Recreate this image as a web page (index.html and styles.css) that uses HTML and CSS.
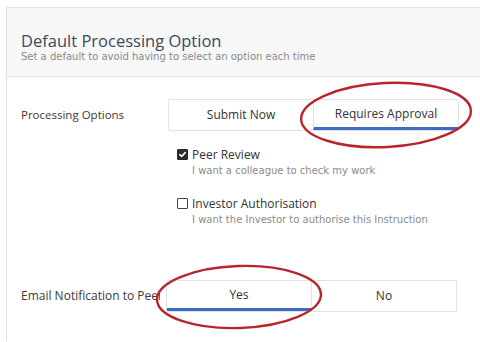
FILE: index.html
```html
<!DOCTYPE html>
<html>
<head>
<meta charset="utf-8">
<link rel="stylesheet" href="styles.css">
</head>
<body>
<div class="card">
  <div class="card-header">
    <h1 class="title">Default Processing Option</h1>
    <p class="subtitle">Set a default to avoid having to select an option each time</p>
  </div>
  <div class="card-body">
    <div class="row">
      <div class="label">Processing Options</div>
      <div class="field">
        <div class="seg">
          <div class="seg-btn">Submit Now</div>
          <div class="seg-btn active">Requires Approval</div>
        </div>
        <div class="checks">
          <div class="check">
            <div class="check-line">
              <span class="box checked"><svg width="9" height="9" viewBox="0 0 9 9"><path d="M1.8 4.6 L3.7 6.4 L7.2 2.6" fill="none" stroke="#fff" stroke-width="1.6" stroke-linecap="round" stroke-linejoin="round"/></svg></span>
              <span class="check-label">Peer Review</span>
            </div>
            <div class="check-desc">I want a colleague to check my work</div>
          </div>
          <div class="check">
            <div class="check-line">
              <span class="box"></span>
              <span class="check-label">Investor Authorisation</span>
            </div>
            <div class="check-desc">I want the Investor to authorise this Instruction</div>
          </div>
        </div>
      </div>
    </div>
    <div class="row row-email">
      <div class="label label-email"><span class="label-clip">Email Notification to Peer Reviewer</span></div>
      <div class="field">
        <div class="seg">
          <div class="seg-btn active">Yes</div>
          <div class="seg-btn">No</div>
        </div>
      </div>
    </div>
  </div>
</div>
<svg class="annot" width="480" height="342" viewBox="0 0 480 342">
  <ellipse cx="386" cy="115" rx="85" ry="32" transform="rotate(-3 386 115)" fill="none" stroke="#b8262c" stroke-width="2.4"/>
  <ellipse cx="239" cy="297" rx="82" ry="31" transform="rotate(-2 239 297)" fill="none" stroke="#b8262c" stroke-width="2.4"/>
</svg>
</body>
</html>
```
FILE: styles.css
```css
html, body {
  margin: 0;
  padding: 0;
  background: #fff;
  width: 480px;
  height: 342px;
  overflow: hidden;
  font-family: "Open Sans", "DejaVu Sans", sans-serif;
  color: #333;
}
.card {
  margin: 7px 0 0 6px;
  border: 1px solid #e2e2e2;
  border-right: none;
  border-bottom: none;
  height: 334px;
  box-sizing: border-box;
  overflow: hidden;
}
.card-header {
  background: #f7f7f7;
  border-bottom: 1px solid #e4e4e4;
  height: 69px;
  box-sizing: border-box;
  padding: 23px 14px 0 14px;
}
.title {
  margin: 0;
  font-size: 16.5px;
  font-weight: normal;
  color: #3c4a5c;
  line-height: 20px;
}
.subtitle {
  margin: 0;
  font-family: "DejaVu Sans", sans-serif;
  font-size: 10px;
  color: #8a8a8a;
  line-height: 12px;
}
.card-body {
  padding: 22px 14px 0 14px;
}
.row {
  display: flex;
  align-items: flex-start;
}
.label {
  width: 147px;
  flex: none;
  font-size: 11.5px;
  line-height: 32px;
  color: #3a3a3a;
}
.label-email {
  width: 145px;
  font-size: 12px;
}
.label-clip {
  display: block;
  width: 139px;
  white-space: nowrap;
  overflow: hidden;
}
.field {
  flex: none;
  width: 291px;
}
.seg {
  display: flex;
  height: 32px;
  border: 1px solid #e2e2e2;
  border-radius: 2px;
  box-sizing: border-box;
  background: #fff;
}
.seg-btn {
  flex: 1;
  text-align: center;
  font-size: 12px;
  line-height: 30px;
  color: #333;
  box-sizing: border-box;
}
.seg-btn + .seg-btn {
  border-left: 1px solid #e2e2e2;
}
.seg-btn.active {
  border-bottom: 3px solid #3b6cc3;
  line-height: 28px;
}
.checks {
  margin: 16px 0 0 9px;
  display: flex;
  flex-direction: column;
  gap: 18px;
}
.check-line {
  display: flex;
  align-items: center;
  gap: 4px;
  height: 14px;
}
.box {
  width: 11px;
  height: 11px;
  box-sizing: border-box;
  border: 1px solid #444;
  border-radius: 1px;
  display: flex;
  align-items: center;
  justify-content: center;
}
.box.checked {
  background: #2b2b2b;
  border-color: #2b2b2b;
}
.check-label {
  font-size: 12px;
  color: #333;
}
.check-desc {
  margin: 3px 0 0 15px;
  font-family: "DejaVu Sans", sans-serif;
  font-size: 10px;
  color: #8a8a8a;
  line-height: 14px;
}
.row-email {
  margin-top: 53px;
}
.annot {
  position: absolute;
  left: 0;
  top: 0;
  pointer-events: none;
}
```
